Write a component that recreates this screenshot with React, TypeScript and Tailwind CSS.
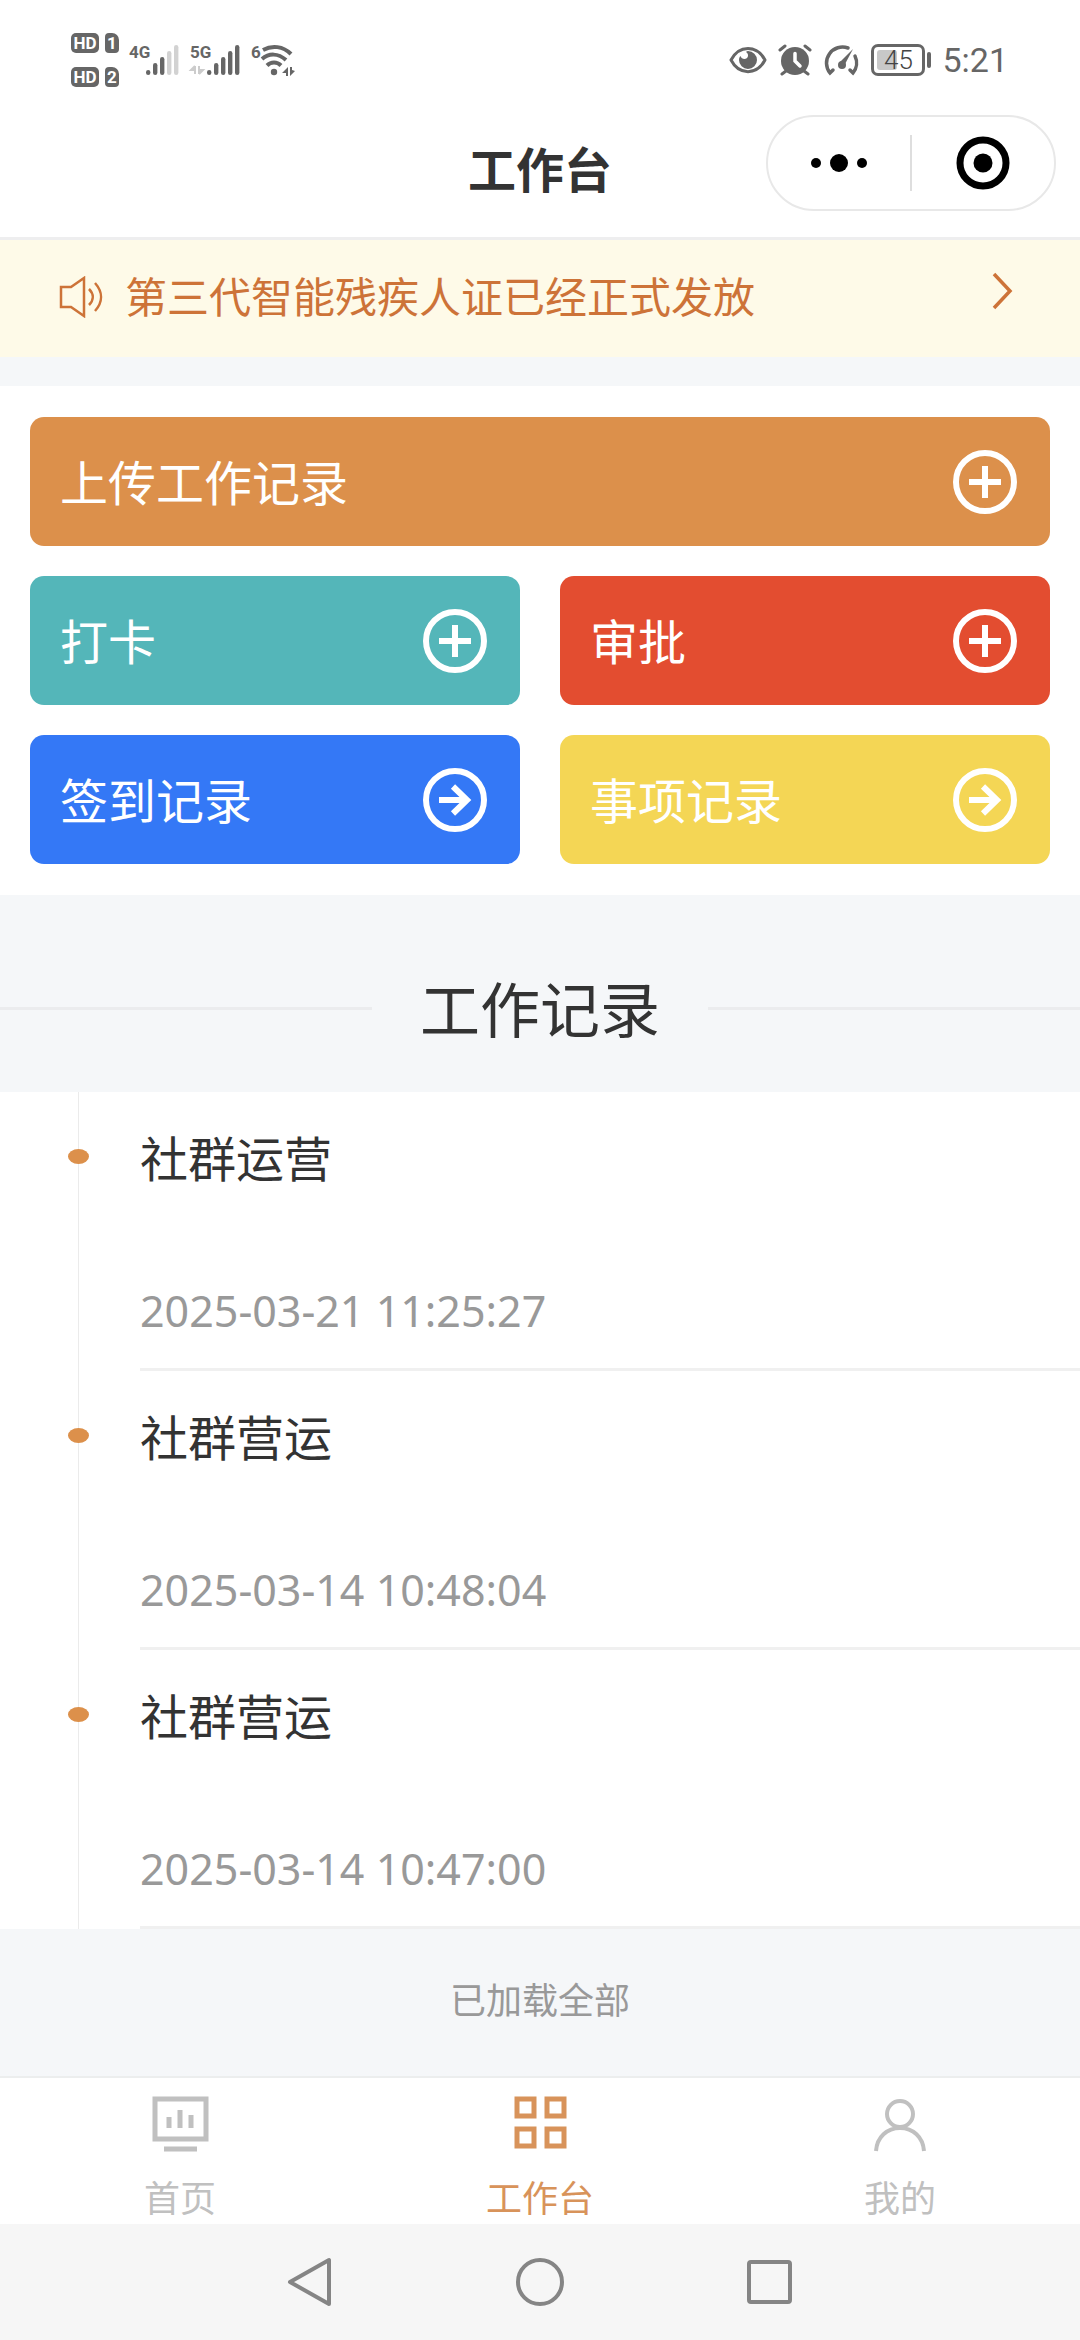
import type { ReactNode } from "react";

type ActionIcon = "plus" | "arrow";

const actions: { label: string; icon: ActionIcon; className: string }[] = [
  { label: "上传工作记录", icon: "plus", className: "col-span-2 bg-[#dc904b]" },
  { label: "打卡", icon: "plus", className: "bg-[#54b6b9]" },
  { label: "审批", icon: "plus", className: "bg-[#e34d30]" },
  { label: "签到记录", icon: "arrow", className: "bg-[#3478f6]" },
  { label: "事项记录", icon: "arrow", className: "bg-[#f4d655]" },
];

const records = [
  { title: "社群运营", time: "2025-03-21 11:25:27" },
  { title: "社群营运", time: "2025-03-14 10:48:04" },
  { title: "社群营运", time: "2025-03-14 10:47:00" },
];

function SimBadge({ slot }: { slot: string }) {
  return (
    <div className="flex gap-1.5 text-center text-[17px] leading-5 font-bold text-white">
      <span className="h-5 w-7 rounded-[5px] bg-[#666]">HD</span>
      <span className="h-5 w-3.5 rounded-[4px] rounded-tr-[7px] bg-[#666]">{slot}</span>
    </div>
  );
}

function Signal({ label, bars, data }: { label: string; bars: number; data?: boolean }) {
  return (
    <svg className="overflow-visible" width="51" height="36" viewBox="0 -4 51 36" fill="#666">
      <text x="0" y="14" fontSize="17" fontWeight="700">
        {label}
      </text>
      {[5, 12, 18, 24, 30].map((h, i) => (
        <rect
          key={h}
          x={17 + i * 7}
          y={31 - h}
          width="4.4"
          height={h}
          rx="2.2"
          fill={i < bars ? "#666" : "#d2d2d2"}
        />
      ))}
      {data && <path d="M5 22v8M5 22l-4 4h4M9 22v8M9 30l4-4H9" fill="#ccc" stroke="#ccc" strokeWidth="2" />}
    </svg>
  );
}

function Wifi() {
  return (
    <svg className="overflow-visible" width="44" height="37" viewBox="0 -4 44 37" fill="none" stroke="#666" strokeWidth="4">
      <text x="0" y="14" fontSize="17" fontWeight="700" fill="#666" stroke="none">
        6
      </text>
      <path d="M12 6c9-5 20-4 28 4M11 15c7-6 16-6 24 1M16 21.500c4-4 10-4 14 0" />
      <circle cx="23" cy="28" r="3.200" fill="#666" stroke="none" />
      <path d="M37 23v9h-2v-3h-4zM39 32v-9h2v3l3 1z" fill="#666" stroke="none" />
    </svg>
  );
}

function StatusBar() {
  return (
    <div className="flex h-[108px] items-center justify-between pt-3 pr-[72px] pl-[71px] font-['Roboto',sans-serif] text-[#666]">
      <div className="flex items-center gap-2.5">
        <div className="flex flex-col gap-3.5">
          <SimBadge slot="1" />
          <SimBadge slot="2" />
        </div>
        <div className="flex items-center gap-2.5 pb-1">
          <Signal label="4G" bars={3} />
          <Signal label="5G" bars={5} data />
          <Wifi />
        </div>
      </div>
      <div className="flex items-center gap-[11px]">
        <svg width="38" height="28" viewBox="0 0 38 28" fill="none" stroke="#666" strokeWidth="3">
          <path d="M2 14C10-1.500 28-1.500 36 14 28 29.500 10 29.500 2 14z" strokeLinejoin="round" />
          <path d="M19 5a9 9 0 1 1-9 9c0-2 .500-3 1.500-4 1 4 7 4 7.500 0 .2-2-.5-3-2-4 .5-.7 1.200-1 2-1z" fill="#666" stroke="none" />
        </svg>
        <svg width="34" height="32" viewBox="0 0 34 32" fill="none" stroke="#666" strokeWidth="3" strokeLinecap="round">
          <circle cx="17" cy="17" r="14" fill="#666" stroke="none" />
          <path d="M2 6l5-4M32 6l-5-4M8 27l-4 3M26 27l4 3" />
          <path d="M17 9.500V17l5 5" stroke="#fff" strokeWidth="3.500" />
        </svg>
        <svg width="37" height="32" viewBox="0 0 37 32" fill="none" stroke="#666" strokeWidth="3.500" strokeLinecap="round">
          <path d="M25 4A16 16 0 0 0 7 29l3-3M32 12a16 16 0 0 1-2 17l-3-3" />
          <path d="M30 5L21 22a3 3 0 0 1-5-3z" fill="#666" stroke="none" />
          <circle cx="19" cy="21" r="4" fill="#666" stroke="none" />
        </svg>
        <div className="flex items-center gap-0.5">
          <div className="relative flex h-8 w-[54px] items-center justify-center rounded-[7px] border-3 border-[#666] text-[26px] font-light text-[#444]">
            <span className="absolute inset-y-[3px] left-[3px] w-5 rounded-[3px] bg-[#c8c8c8]" />
            <span className="relative">45</span>
          </div>
          <span className="h-4 w-1 rounded-full bg-[#666]" />
        </div>
        <span className="text-[34px] leading-9">5:21</span>
      </div>
    </div>
  );
}

function TitleBar() {
  return (
    <header className="grid h-[132px] grid-cols-[1fr_auto_1fr] items-start border-b-3 border-[#eeeeef] pt-[7px]">
      <h1 className="col-start-2 pt-[22px] text-5xl leading-[60px] font-bold text-[#333]">工作台</h1>
      <div className="mr-6 flex h-24 w-[290px] items-center justify-self-end rounded-full border-2 border-[#e8e8e8]">
        <button aria-label="更多" className="grid h-full flex-1 place-items-center">
          <svg width="58" height="20" viewBox="0 0 58 20">
            <circle cx="6" cy="10" r="5" />
            <circle cx="29" cy="10" r="9" />
            <circle cx="52" cy="10" r="5" />
          </svg>
        </button>
        <span className="h-14 w-0.5 bg-[#dedede]" />
        <button aria-label="关闭" className="grid h-full flex-1 place-items-center">
          <svg width="54" height="54" viewBox="0 0 54 54">
            <circle cx="27" cy="27" r="23" fill="none" stroke="#000" strokeWidth="7" />
            <circle cx="27" cy="27" r="9.500" />
          </svg>
        </button>
      </div>
    </header>
  );
}

function Notice() {
  return (
    <a href="#notice" className="flex h-[117px] items-center bg-[#fefae8] pr-[66px] pb-1 pl-[59px] text-[#cd7338]">
      <svg width="46" height="42" viewBox="0 0 46 42" fill="none" stroke="currentColor" strokeWidth="2.500">
        <path d="M2 11h10L25 2v38L12 31H2z" />
        <path d="M30 13c5 5 5 11 0 16M36 7c8 9 8 19 0 28" />
      </svg>
      <span className="ml-5 flex-1 pb-1 text-[42px] leading-[60px]">第三代智能残疾人证已经正式发放</span>
      <svg className="mb-3" width="24" height="38" viewBox="0 0 24 38" fill="none" stroke="currentColor" strokeWidth="3.500">
        <path d="M4 2l16 17L4 36" />
      </svg>
    </a>
  );
}

function ActionButton({ label, icon, className }: (typeof actions)[number]) {
  return (
    <button className={`flex h-[129px] items-center justify-between rounded-[14px] pr-8 pl-[30px] text-white ${className}`}>
      <span className="pb-1 text-5xl leading-[60px]">{label}</span>
      <svg width="66" height="66" viewBox="0 0 66 66" fill="none" stroke="currentColor" strokeWidth="6">
        <circle cx="33" cy="33" r="29" />
        {icon === "plus" ? <path d="M33 17v32M17 33h32" /> : <path d="M17 33h28M31 19.500L45 33 31 46.500" />}
      </svg>
    </button>
  );
}

function RecordItem({ title, time }: (typeof records)[number]) {
  return (
    <li className="relative pl-[140px]">
      <span className="absolute inset-y-0 left-[78px] w-px bg-[#ebebeb]" />
      <span className="absolute top-[57px] left-[68px] h-[15px] w-[21px] rounded-[50%] bg-[#dc904b]" />
      <div className="border-b-3 border-[#f0f0f0] pt-[34px] pb-[33px]">
        <h3 className="text-5xl leading-[60px] text-[#333]">{title}</h3>
        <time className="mt-[101px] block font-['Noto_Sans',sans-serif] text-[43px] leading-[48px] text-[#999]">{time}</time>
      </div>
    </li>
  );
}

function Tab({ label, active, children }: { label: string; active?: boolean; children: ReactNode }) {
  return (
    <a
      href={`#${label}`}
      aria-current={active ? "page" : undefined}
      className={`flex flex-1 flex-col items-center pt-4 ${active ? "text-[#d8935a]" : "text-[#c0c0c0]"}`}
    >
      <svg width="58" height="58" viewBox="0 0 58 58" fill="none" stroke="currentColor" strokeWidth="5">
        {children}
      </svg>
      <span className="mt-[22px] text-4xl leading-[44px]">{label}</span>
    </a>
  );
}

export default function App() {
  return (
    <div className="flex min-h-screen flex-col bg-[#f5f7f9] font-['Noto_Sans_CJK_SC',sans-serif]">
      <div className="bg-white">
        <StatusBar />
        <TitleBar />
      </div>
      <main className="flex-1">
        <Notice />
        <section className="mt-[29px] grid grid-cols-2 gap-x-10 gap-y-[30px] bg-white px-[30px] py-[31px]">
          {actions.map((action) => (
            <ActionButton key={action.label} {...action} />
          ))}
        </section>
        <section>
          <div className="flex h-[197px] items-center gap-12 pt-[30px]">
            <span className="h-[3px] flex-1 bg-[#ebecee]" />
            <h2 className="pb-1 text-6xl leading-[80px] text-[#333]">工作记录</h2>
            <span className="h-[3px] flex-1 bg-[#ebecee]" />
          </div>
          <ul className="bg-white">
            {records.map((record) => (
              <RecordItem key={record.time} {...record} />
            ))}
          </ul>
          <p className="pt-11 pb-[52px] text-center text-4xl leading-[50px] text-[#999]">已加载全部</p>
        </section>
      </main>
      <nav className="flex h-[148px] border-t-2 border-[#eceeee] bg-white">
        <Tab label="首页">
          <path d="M4 5h51v40H4zM13 55h33" />
          <path d="M18 23v11M29 16v18M40 21v13" />
        </Tab>
        <Tab label="工作台" active>
          <path d="M6 5h17v17H6zM36 5h17v17H36zM6 35h17v17H6zM36 35h17v17H36z" />
        </Tab>
        <Tab label="我的">
          <circle cx="29" cy="20" r="13" strokeWidth="4" />
          <path d="M5 57c1-14 11-23 24-23s23 9 24 23" strokeWidth="4" />
        </Tab>
      </nav>
      <footer className="flex h-[116px] items-center justify-center gap-[180px] bg-[#f6f6f6] text-[#858585]">
        <button aria-label="返回">
          <svg width="50" height="50" viewBox="0 0 50 50" fill="none" stroke="currentColor" strokeWidth="4" strokeLinejoin="round">
            <path d="M44 3v44L5 25z" />
          </svg>
        </button>
        <button aria-label="主屏幕">
          <svg width="50" height="50" viewBox="0 0 50 50" fill="none" stroke="currentColor" strokeWidth="4">
            <circle cx="25" cy="25" r="22" />
          </svg>
        </button>
        <button aria-label="最近任务">
          <svg width="50" height="50" viewBox="0 0 50 50" fill="none" stroke="currentColor" strokeWidth="4">
            <rect x="4" y="5" width="41" height="40" rx="2" />
          </svg>
        </button>
      </footer>
    </div>
  );
}
